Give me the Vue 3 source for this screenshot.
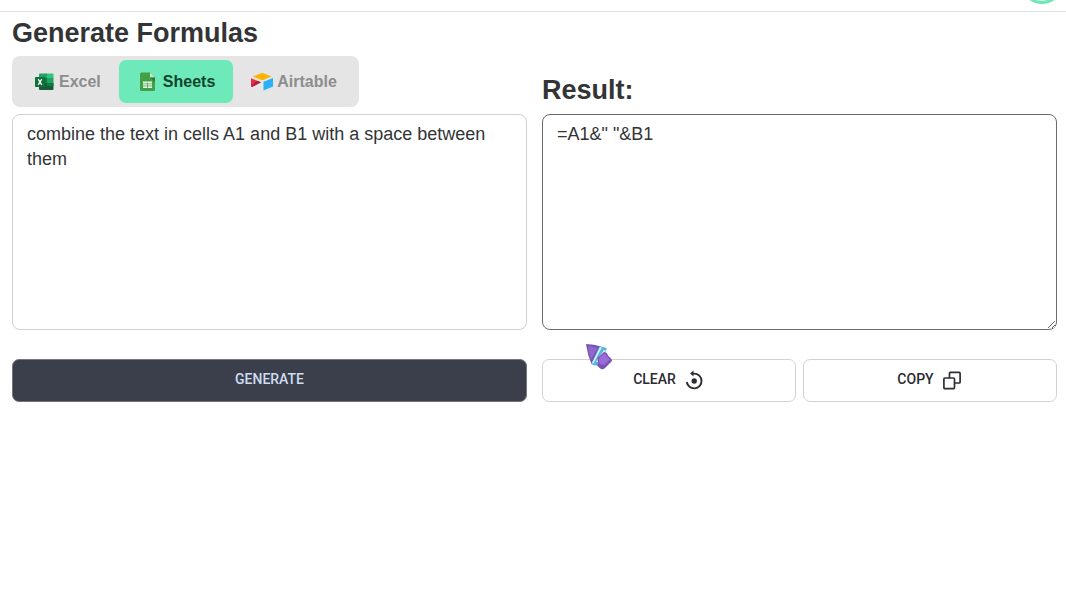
<script setup>
import { ref } from 'vue'

const active = ref('Sheets')
const prompt = ref('combine the text in cells A1 and B1 with a space between them')
const result = ref('=A1&" "&B1')
const tabs = ['Excel', 'Sheets', 'Airtable']

function copy() {
  navigator.clipboard?.writeText(result.value)
}
</script>

<template>
  <div class="page">
    <header class="topbar">
      <div class="avatar"></div>
    </header>
    <main class="columns">
      <section class="column">
        <h1 id="prompt-title" class="title">Generate Formulas</h1>
        <div class="tabs" role="group" aria-label="Application">
          <button
            v-for="tab in tabs"
            :key="tab"
            type="button"
            class="tab"
            :class="{ active: tab === active }"
            :aria-pressed="tab === active"
            @click="active = tab"
          >
            <svg v-if="tab === 'Excel'" width="21" height="20" viewBox="0 0 21 20" aria-hidden="true">
              <path d="M6 1.500h7v5H5v-4q0-1 1-1z" fill="#21a366" />
              <path d="M13 1.500h5.500q1 0 1 1v4H13z" fill="#33c481" />
              <path d="M5 6h8v5H5z" fill="#107c41" />
              <path d="M13 6h6.500v5H13z" fill="#21a366" />
              <path d="M5 11h14.500v6q0 1-1 1H6q-1 0-1-1z" fill="#185c37" />
              <path d="M13 11h6.500v3H13z" fill="#107c41" />
              <rect x="1" y="5" width="10" height="10" rx="1" fill="#0f703b" />
              <path d="M4.200 7.200l3.600 5.600M7.800 7.200l-3.600 5.600" stroke="#fff" stroke-width="1.300" />
            </svg>
            <svg v-else-if="tab === 'Sheets'" width="22" height="20" viewBox="0 0 22 20" aria-hidden="true">
              <path d="M4.500 .5H13l5 5v12q0 1.500-1.500 1.500h-12Q3 19 3 17.500V2Q3 .5 4.500 .5z" fill="#43a047" />
              <path d="M13 .5l5 5h-5z" fill="#c8e6c9" />
              <path d="M13 5.500h5v5z" fill="#2e7d32" />
              <path d="M6 9.500h9V16H6z" fill="#e8f5e9" />
              <path d="M6 11.800h9M6 13.900h9M10.500 10.500V16" stroke="#43a047" stroke-width=".7" />
            </svg>
            <svg v-else width="22" height="20" viewBox="0 0 22 20" aria-hidden="true">
              <path d="M2 4.500L10 1.300q1.300-.5 2.600 0L20.500 4.500l-7.800 3.200q-1.400.5-2.800 0z" fill="#fcb400" />
              <path d="M12.500 9.800L22 6v8.500L12.500 18.500z" fill="#29b0f5" />
              <path d="M0 6.200l10 4.100-8.500 4.500Q0 15.300 0 14z" fill="#e12b4a" />
              <path d="M0 14.500l6-5.700 4 1.500-8.500 4.500z" fill="#b31d3c" />
            </svg>
            <span>{{ tab }}</span>
          </button>
        </div>
        <textarea v-model="prompt" class="box prompt" aria-labelledby="prompt-title" spellcheck="false"></textarea>
        <button type="button" class="action primary">GENERATE</button>
      </section>

      <section class="column">
        <h2 id="result-title" class="title result-title">Result:</h2>
        <textarea v-model="result" class="box result" aria-labelledby="result-title" spellcheck="false"></textarea>
        <div class="actions">
          <button type="button" class="action" @click="result = ''">
            <span>CLEAR</span>
            <svg width="20" height="20" viewBox="0 0 20 20" fill="none" aria-hidden="true">
              <path d="M7 3.600h2.200a7.400 7.400 0 1 1-7.400 8.400" stroke="#2e2e32" stroke-width="1.900" />
              <path d="M8.500 .6v6L5 3.600z" fill="#2e2e32" />
              <circle cx="9.200" cy="11" r="2.700" fill="#2e2e32" />
            </svg>
          </button>
          <button type="button" class="action" @click="copy">
            <span>COPY</span>
            <svg width="20" height="20" viewBox="0 0 20 20" fill="none" stroke="#2e2e32" stroke-width="1.700" stroke-linejoin="round" aria-hidden="true">
              <path d="M6.500 8V3.400q0-1 1-1h8.600q1 0 1 1v8.600q0 1-1 1h-4.600" />
              <rect x=".9" y="8" width="10.600" height="10.600" rx="1" />
            </svg>
          </button>
        </div>
      </section>
    </main>

    <svg class="pointer" width="28" height="28" viewBox="0 0 28 28" aria-hidden="true">
      <path d="M1 1q8 .2 15 2.600L6.500 21Q2.500 12 1 1z" fill="#7851b5" />
      <path d="M3 3q5 .3 9.500 2L6 17Q3.800 10 3 3z" fill="#9068cc" />
      <path d="M14.500 3.200q5 .8 7.500 2.500L13 22.500q-4 .5-6.700-1.500z" fill="#58b4e0" />
      <path d="M15 4l1.800.4L8.500 20.500 7 20zM19 7l2 .6-7.500 12-2.500-1z" fill="#d5f1fb" />
      <path d="M12.500 15L19 9q3 .3 4 3.500l3.500 3.500q1 1 0 2.500l-7 7q-2 1.500-4 .3l-3-2.800q-.5-1 .5-2z" fill="#7a52b8" />
      <path d="M13.500 15.500l5.500-5q2 .5 3 3l3 3-6 5.500-4.500-1z" fill="#9a6cd6" />
    </svg>
  </div>
</template>

<style>
body {
  margin: 0;
  background: #fff;
}
</style>

<style scoped>
.page {
  position: relative;
  color: #333436;
  font-family: "Liberation Sans", Arial, sans-serif;
}
.topbar {
  display: flex;
  align-items: flex-end;
  justify-content: flex-end;
  height: 11px;
  padding-right: 3px;
  overflow: hidden;
  border-bottom: 1px solid #e3e3e3;
}
.avatar {
  box-sizing: border-box;
  width: 42px;
  height: 42px;
  margin-bottom: 7px;
  border: 3px solid #6ee7b7;
  border-radius: 50%;
  background: #e4e7e6;
}
.columns {
  display: grid;
  grid-template-columns: 1fr 1fr;
  gap: 15px;
  padding: 5px 9px 0 12px;
}
.column {
  display: flex;
  flex-direction: column;
  min-width: 0;
}
.title {
  margin: 0;
  font-size: 27px;
  line-height: 32px;
  font-weight: 700;
}
.result-title {
  margin-top: auto;
  margin-bottom: 8px;
}
.tabs {
  display: flex;
  align-self: flex-start;
  margin: 7px 0;
  padding: 4px;
  border-radius: 8px;
  background: #e5e5e5;
}
.tab {
  display: flex;
  align-items: center;
  gap: 4px;
  height: 43px;
  padding: 0 18px;
  border: 0;
  border-radius: 7px;
  background: transparent;
  color: #8d8d8d;
  font: 700 16px/24px "Liberation Sans", Arial, sans-serif;
}
.tab.active {
  background: #6ee9b9;
  color: #10442d;
}
.box {
  display: block;
  box-sizing: border-box;
  width: 100%;
  height: 216px;
  margin: 0;
  padding: 7px 14px;
  border: 1px solid #d0d0d2;
  border-radius: 8px;
  outline: 0;
  background: #fff;
  color: #333436;
  font: 400 18px/25px "Liberation Sans", Arial, sans-serif;
}
.prompt {
  resize: none;
}
.result {
  border-color: #6b6b6d;
}
.action {
  display: flex;
  flex: 1;
  align-items: center;
  justify-content: center;
  gap: 9px;
  box-sizing: border-box;
  min-height: 43px;
  padding: 0 12px 4px;
  border: 1px solid #d2d2d2;
  border-radius: 7px;
  background: #fff;
  color: #2b2b2f;
  font: 500 14px/20px Roboto, sans-serif;
}
.action svg {
  margin-top: 2px;
}
.primary {
  flex: none;
  margin-top: 29px;
  border-color: #73757b;
  background: #3a3f4b;
  color: #cfdcf0;
}
.actions {
  display: flex;
  gap: 7px;
  margin-top: 29px;
}
.pointer {
  position: absolute;
  left: 585px;
  top: 343px;
  pointer-events: none;
}
</style>
